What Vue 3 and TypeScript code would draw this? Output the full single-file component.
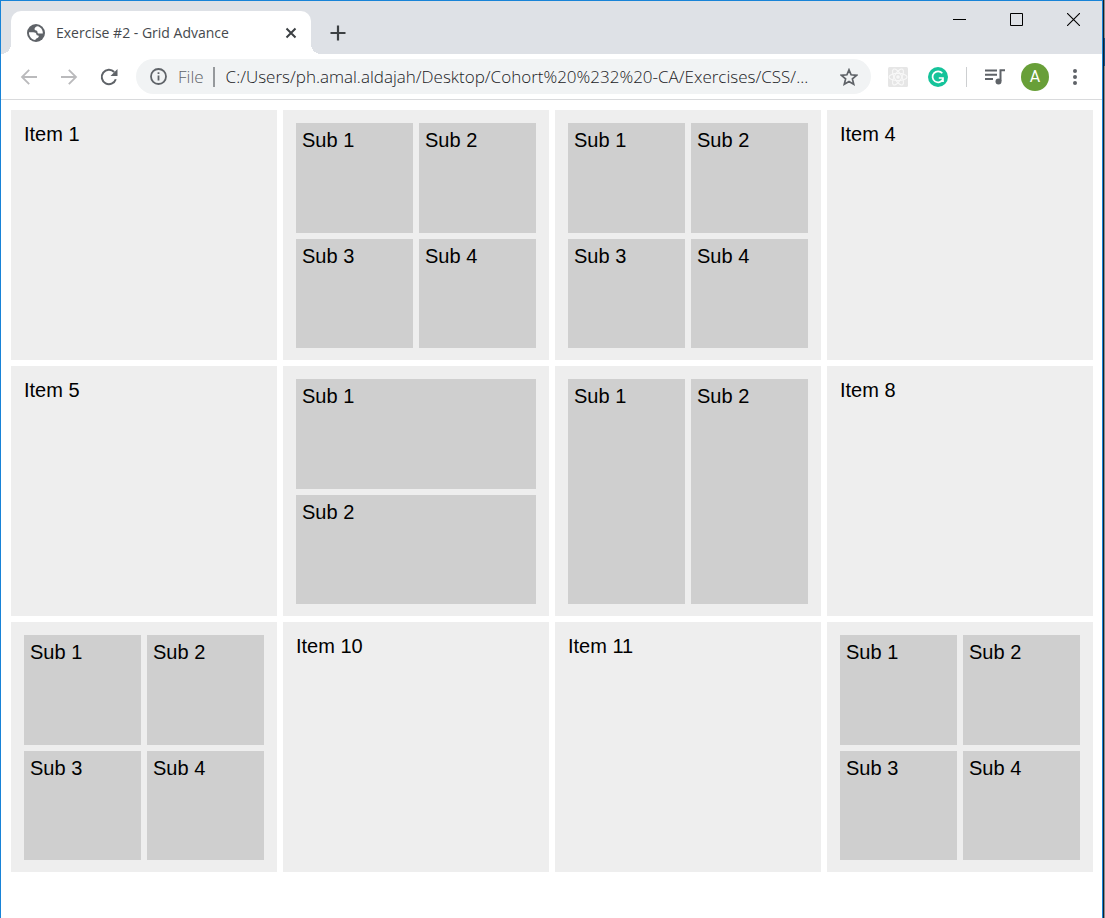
<script setup lang="ts">
import { ref } from 'vue'

interface Cell {
  label?: string
  subs?: number
  layout?: 'quad' | 'rows' | 'cols'
}

const address = ref('C:/Users/ph.amal.aldajah/Desktop/Cohort%20%232%20-CA/Exercises/CSS/...')

const cells: Cell[] = [
  { label: 'Item 1' },
  { subs: 4, layout: 'quad' },
  { subs: 4, layout: 'quad' },
  { label: 'Item 4' },
  { label: 'Item 5' },
  { subs: 2, layout: 'rows' },
  { subs: 2, layout: 'cols' },
  { label: 'Item 8' },
  { subs: 4, layout: 'quad' },
  { label: 'Item 10' },
  { label: 'Item 11' },
  { subs: 4, layout: 'quad' },
]
</script>

<template>
  <div class="screen">
    <div class="window">
      <header class="tabstrip">
        <div class="tab">
          <svg class="globe" viewBox="0 0 18 18" aria-hidden="true">
            <circle cx="9" cy="9" r="9" fill="#5f6368" />
            <path d="M10.500 2.200C9.200 2.500 8 3.300 7.600 4.600c-.3 1.200.5 1.900 1.700 2 .8.100 1 .6 1.100 1.300.1 1 .8 1.500 1.800 1.500h3.600c.3-3.300-1.900-6.500-5.300-7.200z" fill="#fff" />
            <path d="M2 8.200h4.300c1.800 0 3 .9 3.200 2.300.1.700.6.900 1.300.9.900 0 1.200.7.800 1.500-.5.900-1.500 1-2.200 1.500-.5.400-.8.900-1.300 1.500C4.800 15.500 1.700 12.200 2 8.200z" fill="#fff" />
          </svg>
          <span class="title">Exercise #2 - Grid Advance</span>
          <button class="icon close" type="button" aria-label="Close tab">
            <svg width="12" height="12" viewBox="0 0 12 12"><path d="M1.500 1.500l9 9M10.500 1.500l-9 9" stroke="#3c4043" stroke-width="2" /></svg>
          </button>
        </div>
        <button class="icon newtab" type="button" aria-label="New tab">
          <svg width="16" height="16" viewBox="0 0 16 16"><path d="M8 .5v15M.5 8h15" stroke="#3c4043" stroke-width="2.200" /></svg>
        </button>
        <div class="controls">
          <button class="icon" type="button" aria-label="Minimize">
            <svg width="13" height="13" viewBox="0 0 13 13"><path d="M0 6.500h13" stroke="#000" /></svg>
          </button>
          <button class="icon" type="button" aria-label="Maximize">
            <svg width="13" height="13" viewBox="0 0 13 13"><path d="M.5.5h12v12H.5z" fill="none" stroke="#000" /></svg>
          </button>
          <button class="icon" type="button" aria-label="Close window">
            <svg width="13" height="13" viewBox="0 0 13 13"><path d="M0 0l13 13M13 0L0 13" stroke="#000" stroke-width="1.100" /></svg>
          </button>
        </div>
      </header>

      <nav class="toolbar">
        <button class="icon nav" type="button" aria-label="Back">
          <svg width="18" height="18" viewBox="0 0 18 18"><path d="M17 9H2.200M9.200 1.800L2 9l7.200 7.200" fill="none" stroke="#bababc" stroke-width="1.800" /></svg>
        </button>
        <button class="icon nav" type="button" aria-label="Forward">
          <svg width="18" height="18" viewBox="0 0 18 18"><path d="M1 9h14.800M8.800 1.800L16 9l-7.200 7.200" fill="none" stroke="#bababc" stroke-width="1.800" /></svg>
        </button>
        <button class="icon nav" type="button" aria-label="Reload">
          <svg width="18" height="18" viewBox="0 0 18 18"><path d="M15.800 11.200A7.200 7.200 0 1 1 14.200 4" fill="none" stroke="#5f6368" stroke-width="2" /><path d="M17.500 1v7h-7z" fill="#5f6368" /></svg>
        </button>
        <div class="omnibox">
          <svg class="info" width="17" height="17" viewBox="0 0 17 17" aria-hidden="true">
            <circle cx="8.500" cy="8.500" r="7.500" fill="none" stroke="#5f6368" stroke-width="1.800" />
            <path d="M8.500 4.200v1.900M8.500 7.400v5.200" stroke="#5f6368" stroke-width="1.800" />
          </svg>
          <label class="scheme" for="address">File</label>
          <input id="address" v-model="address" class="address" type="text" spellcheck="false" />
          <button class="icon" type="button" aria-label="Bookmark this page">
            <svg width="18" height="18" viewBox="0 0 18 18"><path d="M9 1.800l2.100 5 5.500.5-4.200 3.600 1.300 5.300L9 13.400l-4.700 2.800 1.300-5.300-4.200-3.600 5.500-.5z" fill="none" stroke="#5f6368" stroke-width="1.700" /></svg>
          </button>
        </div>
        <div class="extensions">
          <button class="icon" type="button" aria-label="React Developer Tools">
            <svg width="20" height="20" viewBox="0 0 20 20">
              <rect width="20" height="20" rx="1.500" fill="#e6e6e6" />
              <g fill="none" stroke="#f8f8f8" stroke-width="1.100">
                <ellipse cx="10" cy="10" rx="9" ry="3.600" />
                <ellipse cx="10" cy="10" rx="9" ry="3.600" transform="rotate(60 10 10)" />
                <ellipse cx="10" cy="10" rx="9" ry="3.600" transform="rotate(120 10 10)" />
              </g>
              <circle cx="10" cy="10" r="1.800" fill="#f8f8f8" />
            </svg>
          </button>
          <button class="icon" type="button" aria-label="Grammarly">
            <svg width="20" height="20" viewBox="0 0 20 20">
              <circle cx="10" cy="10" r="10" fill="#15c39a" />
              <path d="M14.300 6.300A5.500 5.500 0 1 0 15 12.200M10.800 11h4.200v4" fill="none" stroke="#fff" stroke-width="1.700" />
            </svg>
          </button>
          <span class="divider"></span>
          <button class="icon" type="button" aria-label="Media controls">
            <svg width="20" height="16" viewBox="0 0 20 16">
              <path d="M0 1.500h12M0 5.800h12M0 10.100h8M15.500 12V1.300H20" fill="none" stroke="#5f6368" stroke-width="2" />
              <circle cx="13.500" cy="12.600" r="3" fill="#5f6368" />
            </svg>
          </button>
          <button class="avatar" type="button" aria-label="Profile">A</button>
          <button class="icon" type="button" aria-label="Menu">
            <svg width="6" height="18" viewBox="0 0 6 18" fill="#5f6368"><circle cx="3" cy="3" r="2" /><circle cx="3" cy="9" r="2" /><circle cx="3" cy="15" r="2" /></svg>
          </button>
        </div>
      </nav>

      <main class="grid">
        <section v-for="(cell, i) in cells" :key="i" class="item" :class="cell.layout">
          <template v-if="cell.label">{{ cell.label }}</template>
          <div v-for="n in cell.subs ?? 0" :key="n" class="sub">Sub {{ n }}</div>
        </section>
      </main>
    </div>
    <div class="backdrop"></div>
  </div>
</template>

<style>
body {
  margin: 0;
}
</style>

<style scoped>
* {
  box-sizing: border-box;
}
.screen {
  display: flex;
  min-height: 100vh;
  background: #fff;
}
.window {
  flex: 1;
  min-width: 0;
  border: solid #1883d7;
  border-width: 1px 1px 0;
}
.backdrop {
  width: 2px;
  border-left: 1px solid #14202c;
  background: linear-gradient(#8c8c8c 38px, #1b5080 38px, #1b5080 66px, #8c8c8c 66px);
}
button {
  padding: 0;
  border: 0;
  background: none;
  font: inherit;
}
.icon {
  display: flex;
  align-items: center;
  justify-content: center;
}
.tabstrip {
  display: flex;
  height: 53px;
  padding-left: 10px;
  background: #dee1e6;
}
.tab {
  position: relative;
  display: flex;
  align-items: center;
  width: 300px;
  margin-top: 10px;
  padding: 0 12px 0 16px;
  border-radius: 10px 10px 0 0;
  background: #fff;
}
.tab::before,
.tab::after {
  content: '';
  position: absolute;
  bottom: 0;
  width: 10px;
  height: 10px;
}
.tab::before {
  right: 100%;
  background: radial-gradient(circle at 0 0, #dee1e6 10px, #fff 10px);
}
.tab::after {
  left: 100%;
  background: radial-gradient(circle at 100% 0, #dee1e6 10px, #fff 10px);
}
.globe {
  width: 18px;
  height: 18px;
}
.title {
  flex: 1;
  margin-left: 11px;
  color: #45494d;
  font: 14px/20px 'Open Sans', 'Noto Sans', sans-serif;
  white-space: nowrap;
}
.close {
  width: 16px;
  height: 16px;
}
.newtab {
  width: 32px;
  margin: 10px 0 0 11px;
}
.controls {
  display: flex;
  gap: 12px;
  height: 37px;
  margin-left: auto;
  padding-right: 6px;
}
.controls .icon {
  width: 45px;
}
.toolbar {
  display: flex;
  align-items: center;
  height: 46px;
  padding-left: 8px;
  border-bottom: 1px solid #d9dadc;
}
.nav {
  width: 40px;
  height: 36px;
}
.omnibox {
  display: flex;
  flex: 1;
  align-items: center;
  min-width: 0;
  height: 35px;
  margin-left: 7px;
  padding: 0 13px 0 14px;
  border-radius: 18px;
  background: #f1f3f4;
  font: 340 17px/24px 'Open Sans', 'Noto Sans', sans-serif;
}
.info {
  flex: none;
}
.scheme {
  margin: 0 11px;
  padding-right: 9px;
  border-right: 2px solid #96999c;
  color: #5f6368;
  line-height: 20px;
}
.address {
  flex: 1;
  min-width: 0;
  padding: 0;
  border: 0;
  outline: 0;
  background: none;
  color: #202124;
  font: inherit;
}
.extensions {
  display: flex;
  align-items: center;
  padding: 0 24px 0 17px;
}
.extensions .icon:nth-child(2) {
  margin: 0 18px 0 20px;
}
.divider {
  width: 1px;
  height: 20px;
  margin-right: 18px;
  background: #cdcfd1;
}
.avatar {
  width: 28px;
  height: 28px;
  margin: 0 23px 0 16px;
  border-radius: 50%;
  background: #689f38;
  color: #fff;
  font: 16px/28px Roboto, sans-serif;
  text-align: center;
}
.grid {
  display: grid;
  grid-template-columns: repeat(4, 1fr);
  grid-auto-rows: 250px;
  gap: 6px;
  padding: 10px 9px 45px 10px;
  color: #000;
  font: 20px/23px 'Liberation Sans', Arial, sans-serif;
}
.item {
  padding: 13px 13px 12px;
  background: #eee;
}
.quad,
.rows,
.cols {
  display: grid;
  gap: 6px;
}
.quad {
  grid-template: 1fr 1fr / 1fr 1fr;
}
.rows {
  grid-template-rows: 1fr 1fr;
}
.cols {
  grid-template-columns: 1fr 1fr;
}
.sub {
  padding: 6px;
  background: #cfcfcf;
}
</style>
